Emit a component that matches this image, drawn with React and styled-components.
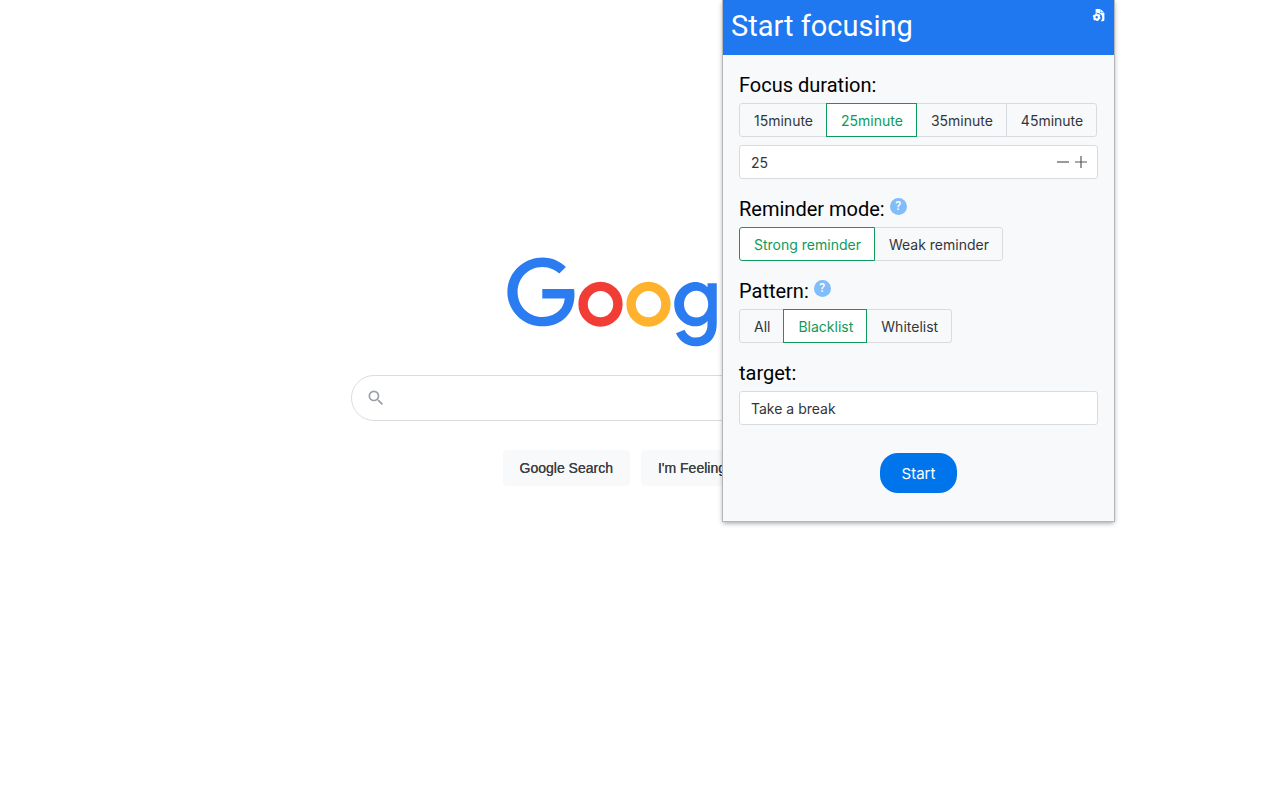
import React, { useState } from "react";
import styled, { createGlobalStyle } from "styled-components";
import { MdSearch } from "react-icons/md";

const GlobalStyle = createGlobalStyle`
  *, *::before, *::after {
    box-sizing: border-box;
  }
  body {
    margin: 0;
    background-color: #fff;
    font-family: Inter, "Liberation Sans", sans-serif;
  }
  button, input {
    font-family: inherit;
  }
`;

const PageWrapper = styled("div")`
  position: relative;
  min-height: 100vh;
`;

const SearchPage = styled("main")`
  display: flex;
  flex-direction: column;
  align-items: center;
  padding: 257px 0 0 6px;
  font-family: "Liberation Sans", Arial, sans-serif;
`;

const SearchForm = styled("form")`
  display: flex;
  flex-direction: column;
  align-items: center;
  width: 100%;
  max-width: 584px;
  margin-top: 26px;
`;

const SearchBox = styled("label")`
  display: flex;
  align-items: center;
  gap: 12px;
  width: 100%;
  height: 46px;
  padding: 0 14px;
  border: 1px solid #dadce0;
  border-radius: 24px;
  color: #9aa0a6;
`;

const SearchInput = styled("input")`
  flex-grow: 1;
  border: none;
  outline: none;
  background: none;
  font-size: 16px;
`;

const SearchButtons = styled("div")`
  display: flex;
  gap: 11px;
  margin-top: 29px;
`;

const SearchButton = styled("button")`
  height: 36px;
  padding: 0 16px;
  border: 1px solid #f8f9fa;
  border-radius: 4px;
  background-color: #f8f9fa;
  color: #3c4043;
  font-size: 14px;
  text-shadow: 0 0 0 #3c4043;
  white-space: nowrap;
  cursor: pointer;
`;

const Popup = styled("section")`
  position: absolute;
  top: 0;
  right: 166px;
  width: 391px;
  background-color: #f8f9fb;
  box-shadow: 0 0 0 1px #b4b6b8, 0 2px 5px rgba(0, 0, 0, 0.4);
`;

const PopupHeader = styled("header")`
  display: flex;
  justify-content: space-between;
  align-items: flex-start;
  height: 55px;
  padding: 8px 8px 0;
  background-color: #1f78f0;
  color: #fff;
`;

const PopupTitle = styled("h1")`
  margin: 0;
  font-family: Roboto, sans-serif;
  font-size: 29px;
  font-weight: 400;
  line-height: 36px;
`;

const IconButton = styled("button")`
  display: flex;
  padding: 0;
  border: none;
  background: none;
  color: inherit;
  cursor: pointer;
`;

const PopupBody = styled("form")`
  display: flex;
  flex-direction: column;
  gap: 16px;
  padding: 16px 16px 28px;
`;

const Section = styled("div")`
  display: flex;
  flex-direction: column;
  align-items: flex-start;
`;

const SectionTitle = styled("div")`
  display: flex;
  align-items: center;
  gap: 5px;
  margin-bottom: 4px;
  color: #000;
  font-family: Roboto, sans-serif;
  font-size: 20px;
  line-height: 28px;
`;

const HelpButton = styled("button")`
  width: 17px;
  height: 17px;
  margin-bottom: 6px;
  padding: 0;
  border: none;
  border-radius: 50%;
  background-color: #80bdfb;
  color: #fff;
  font-size: 12px;
  font-weight: 500;
  line-height: 17px;
  text-align: center;
  cursor: pointer;
`;

const RadioList = styled("div")`
  display: flex;
  max-width: 100%;
`;

const RadioButton = styled("label")`
  position: relative;
  height: 34px;
  padding: 0 13px 0 14px;
  border: 1px solid ${(props) => (props.$checked ? "#0f9a5c" : "#d9dbe0")};
  background-color: ${(props) => (props.$checked ? "#fff" : "transparent")};
  color: ${(props) => (props.$checked ? "#0f9a5c" : "#333639")};
  z-index: ${(props) => (props.$checked ? 1 : 0)};
  font-size: 14px;
  line-height: 34px;
  white-space: nowrap;
  cursor: pointer;
  &:not(:first-child) {
    margin-left: -1px;
  }
  &:first-child {
    border-radius: 3px 0 0 3px;
  }
  &:last-child {
    border-radius: 0 3px 3px 0;
  }
`;

const HiddenRadio = styled("input")`
  position: absolute;
  inset: 0;
  margin: 0;
  opacity: 0;
  cursor: pointer;
`;

const InputBox = styled("div")`
  display: flex;
  align-items: center;
  gap: 6px;
  width: 100%;
  height: 34px;
  margin-top: ${(props) => (props.$spaced ? "8px" : "0")};
  padding: 0 10px 0 11px;
  border: 1px solid #d9dbe0;
  border-radius: 3px;
  background-color: #fff;
  color: #55585b;
`;

const TextInput = styled("input")`
  flex-grow: 1;
  min-width: 0;
  padding: 0;
  border: none;
  outline: none;
  background: none;
  color: #333639;
  font-size: 14px;
`;

const StartButton = styled("button")`
  align-self: center;
  height: 40px;
  margin-top: 12px;
  padding: 0 22px;
  border: none;
  border-radius: 18px;
  background-color: #0075eb;
  color: #fff;
  font-size: 15px;
  cursor: pointer;
`;

const Logo = () => (
  <svg width="272" height="92" viewBox="0 0 272 92" role="img" aria-label="Google">
    <path
      fill="#2b7cf0"
      d="M35.29 41.41V32H67c.31 1.64.47 3.58.47 5.68 0 7.06-1.93 15.79-8.15 22.01-6.05 6.3-13.78 9.66-24.02 9.66C16.32 69.35.36 53.89.36 34.91.36 15.93 16.32.47 35.3.47c10.5 0 17.98 4.12 23.6 9.49l-6.64 6.64c-4.03-3.78-9.49-6.72-16.97-6.72-13.86 0-24.7 11.17-24.7 25.03 0 13.86 10.84 25.03 24.7 25.03 8.99 0 14.11-3.61 17.39-6.89 2.66-2.66 4.41-6.46 5.1-11.65l-22.49.01z"
    />
    <ellipse cx="93.5" cy="47.2" rx="17.4" ry="17.8" fill="none" stroke="#f23c36" strokeWidth="9.4" />
    <ellipse cx="141.5" cy="47.2" rx="17.4" ry="17.8" fill="none" stroke="#ffb22d" strokeWidth="9.4" />
    <path
      fill="#2b7cf0"
      d="M209.75 26.34v39.82c0 16.38-9.66 23.07-21.08 23.07-10.75 0-17.22-7.19-19.66-13.07l8.48-3.53c1.51 3.61 5.21 7.87 11.17 7.87 7.31 0 11.84-4.51 11.84-13v-3.19h-.34c-2.18 2.69-6.38 5.04-11.68 5.04-11.09 0-21.25-9.66-21.25-22.09 0-12.52 10.16-22.26 21.25-22.26 5.29 0 9.49 2.35 11.68 4.96h.34v-3.61h9.25zm-8.56 20.92c0-7.81-5.21-13.52-11.84-13.52-6.72 0-12.35 5.71-12.35 13.52 0 7.73 5.63 13.36 12.35 13.36 6.63 0 11.84-5.63 11.84-13.36z"
    />
    <rect x="217" y="3" width="9" height="65" fill="#2da94f" />
    <path
      fill="#f23c36"
      d="M262.02 54.48l7.56 5.04c-2.44 3.61-8.32 9.83-18.48 9.83-12.6 0-22.01-9.74-22.01-22.18 0-13.19 9.49-22.18 20.92-22.18 11.51 0 17.14 9.16 18.98 14.11l1.01 2.52-29.65 12.28c2.27 4.45 5.8 6.72 10.75 6.72 4.96 0 8.4-2.44 10.92-6.14zm-23.27-7.98l19.82-8.23c-1.09-2.77-4.37-4.7-8.23-4.7-4.95 0-11.84 4.37-11.59 12.93z"
    />
  </svg>
);

const FileSettingsIcon = () => (
  <svg width="14" height="14" viewBox="0 0 14 14" aria-hidden="true">
    <path
      fill="currentColor"
      d="M3.6 1H8v4h4.4v6.8c0 .8-.6 1.4-1.4 1.4H8.8c1.6-1.6 2-4 .8-5.9C8.4 5.2 5.8 4.3 3.6 4.8z"
    />
    <path fill="currentColor" d="M8.4 1l3.9 3.6H8.4z" />
    <circle cx="4.7" cy="9.2" r="2.2" fill="none" stroke="currentColor" strokeWidth="2" />
    <circle cx="4.7" cy="9.2" r="3.3" fill="none" stroke="currentColor" strokeWidth="1.2" strokeDasharray="1.9 1.55" />
  </svg>
);

const StepIcon = ({ plus }) => (
  <svg width="12" height="12" viewBox="0 0 12 12" stroke="currentColor" strokeWidth="1.2" aria-hidden="true">
    <path d={plus ? "M0 6h12M6 0v12" : "M0 6h12"} />
  </svg>
);

const RadioGroup = ({ name, label, options, value, onChange }) => (
  <RadioList role="radiogroup" aria-label={label}>
    {options.map((option) => (
      <RadioButton key={option.value} $checked={option.value === value}>
        <HiddenRadio
          type="radio"
          name={name}
          checked={option.value === value}
          onChange={() => onChange(option.value)}
        />
        {option.label}
      </RadioButton>
    ))}
  </RadioList>
);

const DURATIONS = [15, 25, 35, 45].map((n) => ({ value: n, label: `${n}minute` }));
const REMINDERS = [
  { value: "strong", label: "Strong reminder" },
  { value: "weak", label: "Weak reminder" },
];
const PATTERNS = [
  { value: "all", label: "All" },
  { value: "black", label: "Blacklist" },
  { value: "white", label: "Whitelist" },
];

const FocusPopup = () => {
  const [duration, setDuration] = useState(25);
  const [reminder, setReminder] = useState("strong");
  const [pattern, setPattern] = useState("black");
  const [target, setTarget] = useState("Take a break");

  return (
    <Popup>
      <PopupHeader>
        <PopupTitle>Start focusing</PopupTitle>
        <IconButton type="button" aria-label="Settings">
          <FileSettingsIcon />
        </IconButton>
      </PopupHeader>
      <PopupBody onSubmit={(e) => e.preventDefault()}>
        <Section>
          <SectionTitle>
            <label htmlFor="duration">Focus duration:</label>
          </SectionTitle>
          <RadioGroup
            name="duration-preset"
            label="Focus duration"
            options={DURATIONS}
            value={duration}
            onChange={setDuration}
          />
          <InputBox $spaced>
            <TextInput
              id="duration"
              inputMode="numeric"
              value={duration}
              onChange={(e) => setDuration(Number(e.target.value) || 0)}
            />
            <IconButton
              type="button"
              aria-label="Decrease"
              onClick={() => setDuration((prev) => Math.max(prev - 1, 0))}
            >
              <StepIcon />
            </IconButton>
            <IconButton
              type="button"
              aria-label="Increase"
              onClick={() => setDuration((prev) => prev + 1)}
            >
              <StepIcon plus />
            </IconButton>
          </InputBox>
        </Section>
        <Section>
          <SectionTitle>
            Reminder mode:
            <HelpButton type="button">?</HelpButton>
          </SectionTitle>
          <RadioGroup
            name="reminder"
            label="Reminder mode"
            options={REMINDERS}
            value={reminder}
            onChange={setReminder}
          />
        </Section>
        <Section>
          <SectionTitle>
            Pattern:
            <HelpButton type="button">?</HelpButton>
          </SectionTitle>
          <RadioGroup
            name="pattern"
            label="Pattern"
            options={PATTERNS}
            value={pattern}
            onChange={setPattern}
          />
        </Section>
        <Section>
          <SectionTitle>
            <label htmlFor="target">target:</label>
          </SectionTitle>
          <InputBox>
            <TextInput
              id="target"
              value={target}
              onChange={(e) => setTarget(e.target.value)}
            />
          </InputBox>
        </Section>
        <StartButton type="submit">Start</StartButton>
      </PopupBody>
    </Popup>
  );
};

const App = () => (
  <PageWrapper>
    <GlobalStyle />
    <SearchPage>
      <Logo />
      <SearchForm onSubmit={(e) => e.preventDefault()}>
        <SearchBox>
          <MdSearch size={20} aria-hidden="true" />
          <SearchInput aria-label="Search" />
        </SearchBox>
        <SearchButtons>
          <SearchButton type="submit">Google Search</SearchButton>
          <SearchButton type="button">I'm Feeling Lucky</SearchButton>
        </SearchButtons>
      </SearchForm>
    </SearchPage>
    <FocusPopup />
  </PageWrapper>
);

export default App;
